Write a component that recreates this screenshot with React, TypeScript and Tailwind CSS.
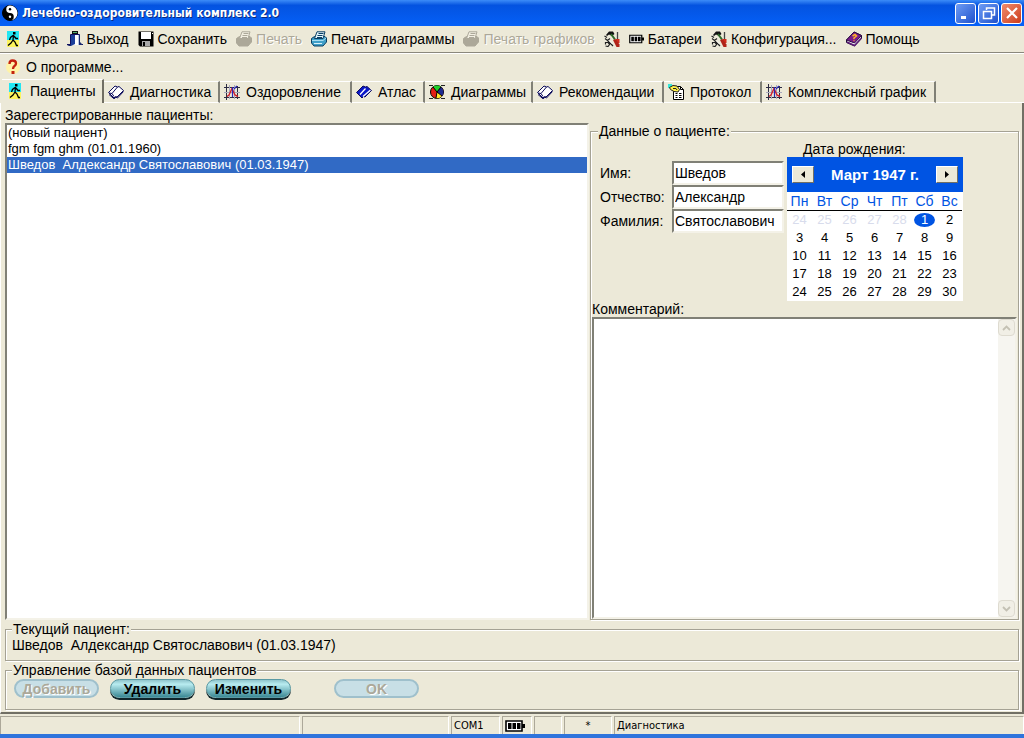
import type { ReactNode } from 'react';

const etched = 'border border-[#a5a294] shadow-[1px_1px_0_#fff,inset_1px_1px_0_#fff]';
const sunken =
  'border-2 border-t-[#808076] border-l-[#808076] border-r-[#f4f2e8] border-b-[#f4f2e8] bg-white';

function Icon({ children, className = 'size-4' }: { children: ReactNode; className?: string }) {
  return (
    <svg viewBox="0 0 16 16" className={`${className} shrink-0`} aria-hidden="true">
      {children}
    </svg>
  );
}

function Walker() {
  return (
    <Icon>
      <rect x="1" width="12" height="9" fill="#22e6f2" />
      <rect x="1" y="9" width="12" height="7" fill="#fdf45c" />
      <rect x="7" y="1" width="2.500" height="2.500" fill="#000" />
      <path d="M7.500 4L7 9L9 11L10.500 14.500H12M7 9L5 12L2 14.500M7 4.500L4.500 6.500L3.500 9M8 5L10 7.500H12" fill="none" stroke="#000" strokeWidth="1.300" />
    </Icon>
  );
}

function Exit() {
  return (
    <Icon>
      <rect x="5" y="0" width="6" height="3" fill="#111" />
      <rect x="6" y="1" width="4" height="1" fill="#4fae6c" />
      <path d="M4 3H13V14H4Z" fill="#fff" />
      <path d="M3.500 14V3.500H12.500V14" fill="none" stroke="#101060" />
      <path d="M4 4H8V13L4 15Z" fill="#1c3f9a" />
      <path d="M11 4H13V14H11Z" fill="#b9c6e4" />
      <path d="M0 13.500H4M12 13.500H16" stroke="#101060" />
      <path d="M0 15L4 13V15ZM12 4V14H16L13 11V4Z" fill="#1b2a70" />
    </Icon>
  );
}

function Floppy() {
  return (
    <Icon>
      <path d="M0.500 0.500H15.500V15.500H2L0.500 14Z" fill="#000" />
      <path d="M3 1H13V8H3Z" fill="#fff" />
      <path d="M4 10H12V15H4Z" fill="#a8a8a8" />
      <path d="M5 11H7V15H5Z" fill="#000" />
      <path d="M14 2H15V3H14Z" fill="#fff" />
    </Icon>
  );
}

function Printer({ muted = false }: { muted?: boolean }) {
  const line = muted ? '#aca899' : '#0b3f63';
  return (
    <Icon>
      <path d="M0.500 7.500L3.500 5.500H14L15.500 7V11L12 15H3L0.500 12Z" fill={muted ? '#aca899' : '#3f9fc8'} stroke={line} />
      <path d="M3.500 7.500L6 0.800H14L12 7.500Z" fill={muted ? '#f2efe2' : '#e4f6fc'} stroke={line} />
      <path d="M7.500 2.500H12.500M6.500 4.500H11.500M6 6.500H11" stroke={line} />
      {!muted && <path d="M1 9.500H12L15 7" fill="none" stroke="#a6dcf0" />}
      {!muted && <path d="M3 12.500H11" stroke="#d9f1fa" />}
    </Icon>
  );
}

function Tools() {
  return (
    <Icon>
      <path d="M2 4L5 0.500H9L10.500 3L8 5L5 3.500L3 5Z" fill="#111" />
      <path d="M7 3L11 8.500" stroke="#2f6b2a" strokeWidth="2" />
      <path d="M13.500 1V8" stroke="#444" strokeWidth="1.300" />
      <path d="M12 8H15.500V12H12Z" fill="#d22b1c" />
      <path d="M9 9L11.500 8L15.500 13.500V16H12.500Z" fill="#b02318" />
      <path d="M1 7.500L3.500 9.500L6 7.500M3.500 9.500L9 15M1.500 13.500L1.500 11.500L4 11.500L5.500 13.500L4 15.500L1.500 15M0.500 5L3 6.500" fill="none" stroke="#222" strokeWidth="1.200" />
      <path d="M5.500 10L8.500 13" stroke="#fff" strokeWidth="0.800" />
    </Icon>
  );
}

function Battery({ className = 'h-4 w-[15px]' }: { className?: string }) {
  return (
    <svg viewBox="0 0 20 12" className={`${className} shrink-0`} aria-hidden="true">
      <path d="M1 1H17V11H1Z" fill="#fff" stroke="#000" strokeWidth="1.600" />
      <path d="M17 4H20V8H17Z" fill="#000" />
      <path d="M3 3H6.500V9H3ZM7.500 3H11V9H7.500ZM12 3H15.500V9H12Z" fill="#000" />
    </svg>
  );
}

function HelpBook() {
  return (
    <Icon>
      <path d="M0.500 9L8 1L15.500 4.500V7.500L8.500 15L0.500 11.500Z" fill="#fff" stroke="#1b0b33" />
      <path d="M0.500 9L8 1L15.500 4.500L8.500 12Z" fill="#7a1b8a" stroke="#2a0b43" />
      <path d="M1 11L8.500 14.500L15.500 7" fill="none" stroke="#5a1b74" strokeWidth="1.500" />
      <path d="M6.500 5L9 3.500L10.500 5L8 7V8M7.500 9.500H8.500" fill="none" stroke="#ffb428" strokeWidth="1.500" />
    </Icon>
  );
}

function Question() {
  return (
    <Icon>
      <circle cx="7" cy="8" r="7" fill="#fff3a8" />
      <path d="M3.500 5C3.500 2 5 1.500 6.500 1.500C9 1.500 10 3 10 4.500C10 7 7 7 7 10" fill="none" stroke="#c3220e" strokeWidth="2.300" />
      <rect x="5.500" y="12" width="3" height="3" fill="#c3220e" />
    </Icon>
  );
}

function Book({ filled = false }: { filled?: boolean }) {
  return (
    <Icon>
      <path
        d="M0.500 8.500L7 2L9.500 3L11 2.500L15.500 6.500L9 13L7.500 12.500L6 14Z"
        fill={filled ? '#0a18c8' : '#fff'}
        stroke="#0b0b5b"
      />
      {filled ? (
        <path d="M7 12.500L14.500 6M4 10.500L9.500 4.500" stroke="#fff" strokeWidth="1.300" />
      ) : (
        <>
          <path d="M9.500 3L4 9.500L6 12.500M4 9.500L1 9" fill="none" stroke="#0b0b5b" />
          <path d="M1 10.500L6 14.800L8 13.200L9.500 14L15.500 7.500" fill="none" stroke="#0b0b5b" />
        </>
      )}
    </Icon>
  );
}

function Graph() {
  return (
    <Icon>
      <path d="M2.500 0V16M0 3.500H16M0 13.500H16M13.500 2V15" stroke="#2c2c44" />
      <path d="M0 8.500H16M5.500 1V15M10.500 1V15" stroke="#a9a9bd" />
      <path d="M3 12.500L5 11L8 4.500L11 11L14 12.500" fill="none" stroke="#d0202c" strokeWidth="1.400" />
      <path d="M8.500 3V13M10 5L13 2" fill="none" stroke="#2828b8" strokeWidth="1.200" />
    </Icon>
  );
}

function Pie() {
  return (
    <Icon>
      <path d="M0 1.500H4M12 1.500H16M0 14.500H4M12 14.500H16" stroke="#222" />
      <circle cx="8" cy="8" r="6.500" fill="#e41c14" stroke="#000" />
      <path d="M8 8L4 3C6 1 10 1 12 3Z" fill="#1fcf2b" />
      <path d="M8 8L12 3C15 6 15 9 13 12Z" fill="#1c2a90" />
      <path d="M8 8L13 12C11 14 9 14.500 7 14Z" fill="#ffe62c" />
      <path d="M8 8L4 3M8 8L12 3M8 8L13 12M8 8L7 14" stroke="#000" />
    </Icon>
  );
}

function Protocol() {
  return (
    <Icon>
      <path d="M5.500 2.500H12.500L15.500 5.500V15.500H5.500Z" fill="#fff" stroke="#000" />
      <path d="M12.500 2.500V5.500H15.500" fill="none" stroke="#000" />
      <path d="M7.500 9.500H9.500M11 9.500H13.500M7.500 11.500H9.500M11 11.500H13.500M7.500 13.500H9.500M11 13.500H13.500" stroke="#000" />
      <path d="M0 0H4V4H0Z" fill="#35e6d8" />
      <path d="M1.500 3.500L5 1.500L9 2L11.500 5.500L10 8L6 7.500L2.500 5.500Z" fill="#fff04a" stroke="#222" />
      <path d="M5 4.500H8L9 6" fill="none" stroke="#222" />
    </Icon>
  );
}

function YinYang() {
  return (
    <Icon>
      <circle cx="8" cy="8" r="7.500" fill="#000" stroke="#000" />
      <path d="M8 0.500A7.500 7.500 0 0 1 8 15.500A3.750 3.750 0 0 0 8 8A3.750 3.750 0 0 1 8 0.500Z" fill="#fff" />
      <circle cx="8" cy="4.200" r="1.200" fill="#000" />
      <circle cx="8" cy="11.800" r="1.200" fill="#fff" />
    </Icon>
  );
}

const toolbar: { label: string; icon: ReactNode; disabled?: boolean; hideLabel?: boolean }[] = [
  { label: 'Аура', icon: <Walker /> },
  { label: 'Выход', icon: <Exit /> },
  { label: 'Сохранить', icon: <Floppy /> },
  { label: 'Печать', icon: <Printer muted />, disabled: true },
  { label: 'Печать диаграммы', icon: <Printer /> },
  { label: 'Печать графиков', icon: <Printer muted />, disabled: true },
  { label: 'Настройка', icon: <Tools />, hideLabel: true },
  { label: 'Батареи', icon: <Battery /> },
  { label: 'Конфигурация...', icon: <Tools /> },
  { label: 'Помощь', icon: <HelpBook /> },
];

const tabs: { label: string; icon: ReactNode; width: string }[] = [
  { label: 'Диагностика', icon: <Book />, width: 'w-[116px]' },
  { label: 'Оздоровление', icon: <Graph />, width: 'w-[132px]' },
  { label: 'Атлас', icon: <Book filled />, width: 'w-[73px]' },
  { label: 'Диаграммы', icon: <Pie />, width: 'w-[108px]' },
  { label: 'Рекомендации', icon: <Book />, width: 'w-[131px]' },
  { label: 'Протокол', icon: <Protocol />, width: 'w-[98px]' },
  { label: 'Комплексный график', icon: <Graph />, width: 'w-[174px]' },
];

const weekdays = ['Пн', 'Вт', 'Ср', 'Чт', 'Пт', 'Сб', 'Вс'];
const weeks = [
  [24, 25, 26, 27, 28, 1, 2],
  [3, 4, 5, 6, 7, 8, 9],
  [10, 11, 12, 13, 14, 15, 16],
  [17, 18, 19, 20, 21, 22, 23],
  [24, 25, 26, 27, 28, 29, 30],
];

const fields = [
  { id: 'first', label: 'Имя:', value: 'Шведов' },
  { id: 'middle', label: 'Отчество:', value: 'Александр' },
  { id: 'last', label: 'Фамилия:', value: 'Святославович' },
];

function TitleBar() {
  const button = 'grid size-[21px] place-items-center rounded-[3px] border border-white';
  return (
    <header className="flex h-[26px] items-center justify-between bg-linear-to-b from-[#3c8cf8] via-[#0453e0] via-20% to-[#0560f8] pr-0.5 pl-0.5">
      <h1 className="flex items-center gap-1 font-['DejaVu_Sans_Condensed','DejaVu_Sans',sans-serif] text-xs font-bold text-white [text-shadow:1px_1px_0_#0a2a80]">
        <YinYang />
        Лечебно-оздоровительный комплекс 2.0
      </h1>
      <div className="flex gap-0.5">
        <button aria-label="Свернуть" className={`${button} bg-linear-to-br from-[#6f9cf4] to-[#1f50cc]`}>
          <Icon><path d="M3 11H8V14H3Z" fill="#fff" /></Icon>
        </button>
        <button aria-label="Восстановить" className={`${button} bg-linear-to-br from-[#6f9cf4] to-[#1f50cc]`}>
          <Icon>
            <path d="M5.500 5V3H13.500V10H11" fill="none" stroke="#fff" strokeWidth="1.500" />
            <path d="M2.500 6.500H10.500V13.500H2.500Z" fill="none" stroke="#fff" strokeWidth="1.500" />
          </Icon>
        </button>
        <button aria-label="Закрыть" className={`${button} bg-linear-to-br from-[#f08a6c] to-[#cc3a14]`}>
          <Icon><path d="M3 3L13 13M13 3L3 13" stroke="#fff" strokeWidth="2.200" /></Icon>
        </button>
      </div>
    </header>
  );
}

function Calendar() {
  const arrow = 'grid h-[17px] w-[22px] place-items-center border border-t-white border-l-white border-r-[#716f64] border-b-[#716f64] bg-[#ece9d8]';
  return (
    <div className="w-[176px] bg-white">
      <div className="flex h-[35px] items-center justify-between bg-[#0054e3] px-[5px]">
        <button aria-label="Предыдущий месяц" className={arrow}>
          <svg viewBox="0 0 4 7" className="h-[7px] w-1"><path d="M4 0V7L0 3.500Z" /></svg>
        </button>
        <span className="text-[15px] font-bold text-white">Март 1947 г.</span>
        <button aria-label="Следующий месяц" className={arrow}>
          <svg viewBox="0 0 4 7" className="h-[7px] w-1"><path d="M0 0V7L4 3.500Z" /></svg>
        </button>
      </div>
      <table className="table-fixed border-collapse text-center text-[13px] leading-[18px]">
        <thead>
          <tr className="border-b border-black text-sm leading-[18px] text-[#0054e3]">
            {weekdays.map((d) => (
              <th key={d} className="w-[25px] p-0 font-normal">{d}</th>
            ))}
          </tr>
        </thead>
        <tbody>
          {weeks.map((week, row) => (
            <tr key={row} className="h-[18px]">
              {week.map((day) => {
                const outside = row === 0 && day > 7;
                const selected = row === 0 && day === 1;
                return (
                  <td key={day} className={`p-0 ${outside ? 'text-[#d8dcec]' : ''}`}>
                    {selected ? (
                      <span className="mx-auto block h-[14px] w-[21px] rounded-[50%] bg-[#0054e3] leading-[14px] text-white">{day}</span>
                    ) : (
                      day
                    )}
                  </td>
                );
              })}
            </tr>
          ))}
        </tbody>
      </table>
    </div>
  );
}

function ScrollArrow({ up = false }: { up?: boolean }) {
  return (
    <button aria-label={up ? 'Вверх' : 'Вниз'} className="grid size-[17px] place-items-center rounded-sm border border-[#dedbd0] bg-[#f1efe6]">
      <svg viewBox="0 0 9 6" className="h-1.5 w-[9px]">
        <path d={up ? 'M1 5L4.500 1.500L8 5' : 'M1 1L4.500 4.500L8 1'} fill="none" stroke="#c4c1b4" strokeWidth="1.800" />
      </svg>
    </button>
  );
}

function PillButton({ label, disabled = false }: { label: string; disabled?: boolean }) {
  const look = disabled
    ? 'border-2 border-[#9fc0cc] bg-[#c8dfe6] text-[#aca899] [text-shadow:1px_1px_0_#fff]'
    : 'border border-[#5a9aa4] bg-linear-to-b from-[#8fc4cc] via-[#b8ecf0] via-25% to-[#3a8a96] text-black shadow-[0_2px_0_#10262c]';
  return (
    <button disabled={disabled} className={`h-[19px] w-[85px] rounded-full text-sm leading-4 font-bold ${look}`}>
      {label}
    </button>
  );
}

export default function App() {
  return (
    <div className="flex min-h-screen flex-col bg-[#ece9d8] font-['Liberation_Sans',Arial,sans-serif] text-sm leading-4 text-black">
      <TitleBar />

      <nav aria-label="Панель инструментов">
        <div className="flex h-[27px] items-center gap-[9px] border-b border-[#8a887c] pl-1.5 whitespace-nowrap shadow-[0_1px_0_#fff]">
          {toolbar.map((item) => (
            <button
              key={item.label}
              aria-label={item.label}
              disabled={item.disabled}
              className={`flex shrink-0 items-center gap-1 ${item.disabled ? 'text-[#aca899] [text-shadow:1px_1px_0_#fff]' : ''}`}
            >
              {item.icon}
              {!item.hideLabel && item.label}
            </button>
          ))}
        </div>
        <div className="flex h-[26px] items-center pt-0.5 pl-1.5">
          <button className="flex items-center gap-1">
            <Question />О программе...
          </button>
        </div>
      </nav>

      <div role="tablist" className="flex items-end pl-0.5 whitespace-nowrap">
        <button role="tab" aria-selected="true" className="flex h-6 w-[102px] items-center gap-1.5 border-t border-r-2 border-t-white border-r-[#716f64] pb-0.5 pl-1.5">
          <Walker />Пациенты
        </button>
        {tabs.map((tab) => (
          <button
            key={tab.label}
            role="tab"
            aria-selected="false"
            className={`flex h-[22px] items-center gap-1.5 border-t border-r-2 border-b border-t-white border-r-[#808076] border-b-white pl-1 ${tab.width}`}
          >
            {tab.icon}
            {tab.label}
          </button>
        ))}
        <div className="flex-1 border-b border-white" />
      </div>

      <main className="flex flex-1 flex-col gap-px border-r-2 border-b-2 border-l border-r-[#716f64] border-b-[#716f64] border-l-white pr-[3px] pb-0.5 pl-1">
        <div className="flex flex-1 gap-px">
          <section className="flex flex-1 flex-col pt-1">
            <h2 id="patients">Зарегестрированные пациенты:</h2>
            <ul role="listbox" aria-labelledby="patients" className={`flex-1 text-[13px] ${sunken}`}>
              <li role="option" aria-selected="false" className="px-px">(новый пациент)</li>
              <li role="option" aria-selected="false" className="px-px">fgm fgm ghm (01.01.1960)</li>
              <li role="option" aria-selected="true" className="bg-[#316ac5] px-px whitespace-pre text-white">
                {'Шведов  Алдександр Святославович (01.03.1947)'}
              </li>
            </ul>
          </section>

          <fieldset className={`mt-5 flex w-[429px] flex-col px-px ${etched}`}>
            <legend className="ml-1.5 bg-[#ece9d8] px-px">Данные о пациенте:</legend>
            <div className="flex h-full flex-col">
              <div className="flex items-start gap-[3px] pl-2">
                <div className="w-[184px] pt-[22px]">
                  {fields.map((f) => (
                    <div key={f.id} className="flex h-6 items-center">
                      <label htmlFor={f.id} className="w-[72px]">{f.label}</label>
                      <input id={f.id} defaultValue={f.value} className={`h-6 w-28 px-px ${sunken}`} />
                    </div>
                  ))}
                </div>
                <div className="pt-0.5">
                  <p className="pl-4">Дата рождения:</p>
                  <Calendar />
                </div>
              </div>
              <label htmlFor="comment">Комментарий:</label>
              <div className={`flex flex-1 ${sunken}`}>
                <textarea id="comment" className="flex-1 resize-none outline-none" />
                <div className="flex flex-col justify-between bg-[#f6f5f0]">
                  <ScrollArrow up />
                  <ScrollArrow />
                </div>
              </div>
            </div>
          </fieldset>
        </div>

        <fieldset className={`h-10 px-1.5 ${etched}`}>
          <legend className="bg-[#ece9d8] px-px">Текущий пациент:</legend>
          <p className="whitespace-pre">{'Шведов  Алдександр Святославович (01.03.1947)'}</p>
        </fieldset>

        <fieldset className={`h-12 px-1.5 ${etched}`}>
          <legend className="bg-[#ece9d8] px-px">Управление базой данных пациентов</legend>
          <div className="flex gap-[11px] pt-px pl-0.5">
            <PillButton label="Добавить" disabled />
            <PillButton label="Удалить" />
            <PillButton label="Изменить" />
            <div className="w-[21px]" />
            <PillButton label="OK" disabled />
          </div>
        </fieldset>
      </main>

      <footer className="flex h-6 gap-0.5 border-b-4 border-[#2f74dc] pt-0.5 font-['DejaVu_Sans_Condensed','DejaVu_Sans',sans-serif] text-[11px] [&>div]:flex [&>div]:items-center [&>div]:border-t [&>div]:border-l [&>div]:border-[#aca899] [&>div]:border-r [&>div]:border-r-white">
        <div className="w-[300px]" />
        <div className="w-[147px]" />
        <div className="w-[49px] pl-0.5">COM1</div>
        <div className="w-[30px] pl-0.5">
          <Battery className="h-3 w-5" />
        </div>
        <div className="w-7" />
        <div className="w-12 justify-center">*</div>
        <div className="flex-1 pl-0.5">Диагностика</div>
      </footer>
    </div>
  );
}
